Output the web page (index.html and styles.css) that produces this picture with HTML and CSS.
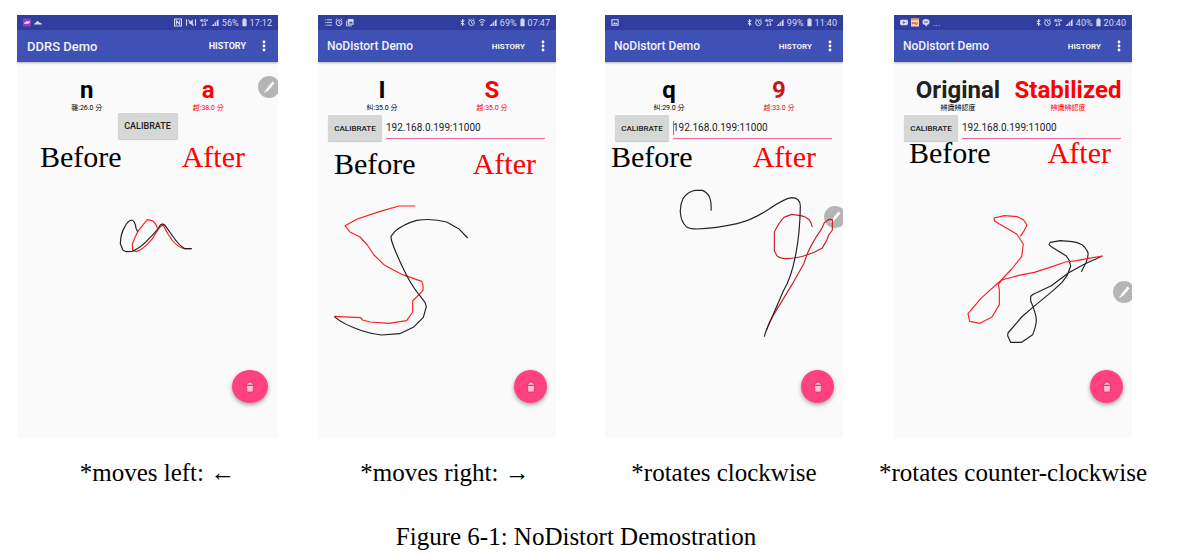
FILE: index.html
```html
<!DOCTYPE html>
<html lang="en">
<head>
<meta charset="utf-8">
<title>NoDistort Demostration</title>
<link rel="stylesheet" href="styles.css">
</head>
<body>
<svg class="symbols" aria-hidden="true">
  <symbol id="bluetooth" viewBox="0 0 6 10"><path d="M.8 3l4.2 4-2 2V1l2 2-4.2 4" fill="none" stroke="currentColor" stroke-width="1.200"/></symbol>
  <symbol id="alarm" viewBox="0 0 8 10"><path d="M4 3.500v2l1.500.8M.5 2L2 .8M7.500 2L6 .8" fill="none" stroke="currentColor"/><circle cx="4" cy="5.300" r="3.200" fill="none" stroke="currentColor" stroke-width="1.100"/></symbol>
  <symbol id="wifi" viewBox="0 0 8 10"><path d="M.5 3q3.500-3 7 0M1.800 5q2.200-1.800 4.400 0M4 6v2.500M2.600 7.200L4 8.600l1.400-1.400" fill="none" stroke="currentColor" stroke-width="1.100"/></symbol>
  <symbol id="lte" viewBox="0 0 9 10"><path d="M1.800 1L.5 3.200H3M2.300 1v3.500M6.500 1.500H4.500v2.700h2V3M7 2.500h2M8 1.500v2M3 6v3M1.800 7.800L3 9l1.200-1.200M6 9V6M4.800 7.200L6 6l1.200 1.200" fill="none" stroke="currentColor"/></symbol>
  <symbol id="signal" viewBox="0 0 8 10"><path d="M0 9l3-3v3zM3.600 5.400L5 4v5H3.600zM5.800 3.200L8 1v8H5.800z" fill="currentColor"/></symbol>
  <symbol id="battery" viewBox="0 0 6 10"><path d="M1.800 0h2.400v1H5.500v8.500h-5V1h1.300z" fill="currentColor"/></symbol>
  <symbol id="trash" viewBox="0 0 10 12"><path d="M1.500 4.500h7L8 11H2z" fill="#ffc0d8" stroke="#c93370" stroke-width=".7"/><path d="M1 4.200Q1.500 2 3.200 2L4 1h2l.8 1q1.700 0 2.200 2.200z" fill="#ffb0cf" stroke="#a92c60" stroke-width=".7"/></symbol>
  <symbol id="pen" viewBox="0 0 22 22"><path d="M7.300 14.300L6 16.800 8.700 15.900zM7.600 13.900L14.500 5.500l2 1.700-7 8.400z" fill="#fff"/></symbol>
  <symbol id="more" viewBox="0 0 4 12"><circle cx="2" cy="2" r="1.400"/><circle cx="2" cy="6" r="1.400"/><circle cx="2" cy="10" r="1.400"/></symbol>
</svg>

<figure class="board">
  <div class="phones">

    <figure class="shot shot-left">
      <div class="phone">
        <div class="status">
          <svg class="ic-square" viewBox="0 0 9 9"><path d="M0 0h9v9H0z" fill="#8e3dc4"/><path d="M1 6q0-2 2-2 1-2 2.500-.5L8 3q0 3-2 3z" fill="#f3d9ff"/></svg>
          <svg class="ic-square" viewBox="0 0 9 9"><path d="M0 6.800q0-2 2-2 1-3 3-1.200 1.200 0 1.400 1.200Q9 4.800 9 6.800z" fill="currentColor"/></svg>
          <span class="spacer"></span>
          <svg class="ic-square" viewBox="0 0 9 9"><path d="M.6.6h7.800v7.800H.6zM2.700 7V2.500l3.600 4V2" fill="none" stroke="currentColor" stroke-width="1.200"/></svg>
          <svg class="ic-wide" viewBox="0 0 12 10"><path d="M1 1.500v7M11 1.500v7M3 2l6 6.500" fill="none" stroke="currentColor" stroke-width="1.200"/><path d="M4 4h1.500L8 1.500v7L5.500 6.500H4z" fill="currentColor"/></svg>
          <svg class="ic-lte"><use href="#lte"/></svg>
          <svg class="ic-signal"><use href="#signal"/></svg>
          <span>56%</span>
          <svg class="ic-battery"><use href="#battery"/></svg>
          <time>17:12</time>
        </div>
        <header class="appbar">
          <h2 class="app-title">DDRS Demo</h2>
          <button class="history">HISTORY</button>
          <button class="more" aria-label="More options"><svg><use href="#more"/></svg></button>
        </header>
        <div class="results">
          <div class="result"><strong>n</strong><small>雜:26.0 分</small></div>
          <div class="result after"><strong>a</strong><small>越:38.0 分</small></div>
        </div>
        <div class="controls"><button class="calibrate">CALIBRATE</button></div>
        <div class="labels"><span>Before</span><span class="after">After</span></div>
        <div class="canvas">
          <svg class="strokes" viewBox="-249 -27 783 771">
            <path class="ink-red" d="M172 114Q165 95 156 92L142 89Q130 103 113 125Q104 143 97 162L98 181L110 185Q126 179 142 163Q158 148 170 125Q181 106 190 106Q201 130 216 150Q231 170 252 176H275"/>
            <path class="ink" d="M113 125L108 115Q106 93 95 90Q83 92 73 113Q62 132 61 161L69 181L79 185L96 184Q124 173 150 143Q172 121 181 105Q188 99 195 106L218 138Q237 167 255 176H275"/>
          </svg>
          <button class="fab" aria-label="Delete"><svg><use href="#trash"/></svg></button>
        </div>
        <span class="bubble"><svg><use href="#pen"/></svg></span>
      </div>
      <figcaption class="note">*moves left: ←</figcaption>
    </figure>

    <figure class="shot shot-right">
      <div class="phone">
        <div class="status">
          <svg class="ic-square" viewBox="0 0 9 9"><path d="M1 1.500h1M3 1.500h6M1 4.500h1M3 4.500h6M1 7.500h1M3 7.500h6" stroke="currentColor"/></svg>
          <svg class="ic-square"><use href="#alarm"/></svg>
          <svg class="ic-square" viewBox="0 0 9 9"><path d="M.7 2.500v5.800h5.800" fill="none" stroke="currentColor"/><path d="M2 .5h6.500V7H2z" fill="currentColor"/><path d="M3 5.500l1.500-2 1 1L6.500 3l1.200 2.500z" fill="#303f9f"/></svg>
          <span class="spacer"></span>
          <svg class="ic-bluetooth"><use href="#bluetooth"/></svg>
          <svg class="ic-alarm"><use href="#alarm"/></svg>
          <svg class="ic-lte"><use href="#wifi"/></svg>
          <svg class="ic-signal"><use href="#signal"/></svg>
          <span>69%</span>
          <svg class="ic-battery"><use href="#battery"/></svg>
          <time>07:47</time>
        </div>
        <header class="appbar">
          <h2 class="app-title">NoDistort Demo</h2>
          <button class="history">HISTORY</button>
          <button class="more" aria-label="More options"><svg><use href="#more"/></svg></button>
        </header>
        <div class="results">
          <div class="result"><strong>I</strong><small>糾:35.0 分</small></div>
          <div class="result after"><strong>S</strong><small>越:35.0 分</small></div>
        </div>
        <div class="controls"><button class="calibrate">CALIBRATE</button><input class="address" aria-label="Server address" value="192.168.0.199:11000"></div>
        <div class="labels"><span>Before</span><span class="after">After</span></div>
        <div class="canvas">
          <svg class="strokes" viewBox="-6 -27 714 771">
            <path class="ink-red" d="M286 48H237L180 64L112 87L75 107L90 126L120 141L142 165L162 195L194 226L222 241L248 254L305 274L309 285V302L278 333V366L260 392L207 400L150 396L128 390L122 383L43 379"/>
            <path class="ink" d="M443 144L416 116L380 96Q337 84 290 91Q250 102 224 125L213 139L214 150Q228 194 262 260Q281 294 297 314L315 337L319 350L310 382L280 412L239 431L185 435Q152 431 128 423Q68 403 43 380"/>
          </svg>
          <button class="fab" aria-label="Delete"><svg><use href="#trash"/></svg></button>
        </div>
      </div>
      <figcaption class="note">*moves right: →</figcaption>
    </figure>

    <figure class="shot shot-clockwise">
      <div class="phone">
        <div class="status">
          <svg class="ic-square" viewBox="0 0 9 9"><path d="M1 1.500h7v6H1z" fill="none" stroke="currentColor" stroke-width="1.200"/><path d="M2 6.500l2-2.500 1.300 1.500L6 4.500l1.500 2z" fill="currentColor"/></svg>
          <span class="spacer"></span>
          <svg class="ic-bluetooth"><use href="#bluetooth"/></svg>
          <svg class="ic-alarm"><use href="#alarm"/></svg>
          <svg class="ic-lte"><use href="#lte"/></svg>
          <svg class="ic-signal"><use href="#signal"/></svg>
          <span>99%</span>
          <svg class="ic-battery"><use href="#battery"/></svg>
          <time>11:40</time>
        </div>
        <header class="appbar">
          <h2 class="app-title">NoDistort Demo</h2>
          <button class="history">HISTORY</button>
          <button class="more" aria-label="More options"><svg><use href="#more"/></svg></button>
        </header>
        <div class="results">
          <div class="result"><strong>q</strong><small>糾:29.0 分</small></div>
          <div class="result after"><strong>9</strong><small>越:33.0 分</small></div>
        </div>
        <div class="controls"><button class="calibrate">CALIBRATE</button><input class="address editing" aria-label="Server address" value="192.168.0.199:11000"></div>
        <div class="labels"><span>Before</span><span class="after">After</span></div>
        <div class="canvas">
          <span class="bubble"><svg><use href="#pen"/></svg></span>
          <svg class="strokes" viewBox="15 3 714 771">
            <path class="ink-red" d="M637 141Q632 112 602 107L575 103L552 112Q536 129 523 156V212L530 226Q538 235 558 236Q593 235 620 225Q642 219 666 205L680 182L686 165L697 150V119L687 118L673 128L665 146Q635 190 622 221L611 252L580 307L518 409Q505 430 499 452"/>
            <path class="ink" d="M333 92Q335 68 329 52Q321 36 307 31H286Q263 34 249 56Q240 73 241 97Q243 126 259 140Q270 147 290 147Q348 145 411 131Q457 120 506 88Q554 55 575 53Q600 53 601 78Q600 161 586 230Q573 295 550 333L510 426Q497 453 493 470"/>
          </svg>
          <button class="fab" aria-label="Delete"><svg><use href="#trash"/></svg></button>
        </div>
      </div>
      <figcaption class="note">*rotates clockwise</figcaption>
    </figure>

    <figure class="shot shot-counter">
      <div class="phone">
        <div class="status">
          <svg class="ic-square" viewBox="0 0 9 9"><rect y="1.500" width="9" height="6" rx="1.500" fill="currentColor"/><path d="M3.500 3v3L6 4.500z" fill="#303f9f"/></svg>
          <svg class="ic-square" viewBox="0 0 9 9"><path d="M0 0h9v9H0z" fill="#f5d7c4"/><path d="M0 0h9v2H0z" fill="#e89a3c"/><path d="M1.500 6.500V4l2 2V4M5 4v2.500h2V4" fill="none" stroke="#e0433a"/></svg>
          <svg class="ic-square" viewBox="0 0 9 9"><ellipse cx="4.500" cy="4" rx="4" ry="3.300" fill="currentColor"/><path d="M3.500 7h3L4.500 9z" fill="currentColor"/><path d="M2.500 4h4" stroke="#303f9f"/></svg>
          <span>...</span>
          <span class="spacer"></span>
          <svg class="ic-bluetooth"><use href="#bluetooth"/></svg>
          <svg class="ic-alarm"><use href="#alarm"/></svg>
          <svg class="ic-lte"><use href="#lte"/></svg>
          <svg class="ic-signal"><use href="#signal"/></svg>
          <span>40%</span>
          <svg class="ic-battery"><use href="#battery"/></svg>
          <time>20:40</time>
        </div>
        <header class="appbar">
          <h2 class="app-title">NoDistort Demo</h2>
          <button class="history">HISTORY</button>
          <button class="more" aria-label="More options"><svg><use href="#more"/></svg></button>
        </header>
        <div class="results">
          <div class="result"><strong>Original</strong><small>辨識辨認度</small></div>
          <div class="result after"><strong>Stabilized</strong><small>辨識辨認度</small></div>
        </div>
        <div class="controls"><button class="calibrate">CALIBRATE</button><input class="address" aria-label="Server address" value="192.168.0.199:11000"></div>
        <div class="labels"><span>Before</span><span class="after">After</span></div>
        <div class="canvas">
          <svg class="strokes" viewBox="12 -27 714 771">
            <path class="ink" d="M574 245L588 218Q597 196 593 185Q587 172 576 164Q561 156 547 155L511 152L481 157L477 164L484 170L529 198L538 212L542 229L531 257L516 277L490 301L431 350L395 381L354 429L353 437L362 457H395L428 434Q438 409 439 393L438 379L430 352L422 333V319L430 313L484 287L536 248L584 222L637 198"/>
            <path class="ink-red" d="M391 139L403 121L411 105L400 89L382 80L343 77L312 84L314 94L380 132L400 162L395 200L365 237L334 270L273 325L234 371L239 394L270 400L306 381L328 344V300L325 282L336 270L387 256L433 247L477 233L527 216L560 212L596 205L637 198"/>
          </svg>
          <span class="bubble"><svg><use href="#pen"/></svg></span>
          <button class="fab" aria-label="Delete"><svg><use href="#trash"/></svg></button>
        </div>
      </div>
      <figcaption class="note">*rotates counter-clockwise</figcaption>
    </figure>
  </div>
  <figcaption class="title">Figure 6-1: NoDistort Demostration</figcaption>
</figure>
</body>
</html>
```
FILE: styles.css
```css
* {
  box-sizing: border-box;
}

body {
  margin: 0;
  background: #fff;
  color: #000;
  font-family: "Liberation Serif", "Times New Roman", serif;
}

figure,
h2 {
  margin: 0;
}

button,
input {
  margin: 0;
  padding: 0;
  border: 0;
  background: none;
  color: inherit;
  font: inherit;
}

.symbols {
  position: absolute;
  width: 0;
  height: 0;
}

.phones {
  display: grid;
  grid-template-columns:
    minmax(0, 261fr) 40px minmax(0, 238fr) 49px
    minmax(0, 238fr) 51px minmax(0, 238fr);
  padding: 15px 68px 0 17px;
}

.shot-left { grid-column: 1; }
.shot-right { grid-column: 3; }
.shot-clockwise { grid-column: 5; }
.shot-counter { grid-column: 7; }

.phone {
  position: relative;
  overflow: hidden;
  background: #fafafa;
  font-family: Roboto, "Noto Sans CJK TC", sans-serif;
}

/* Status bar */
.status {
  display: flex;
  align-items: center;
  gap: 3px;
  height: 15px;
  padding: 0 6px;
  background: #303f9f;
  color: #d5d9ee;
  font-size: 9px;
  line-height: 16px;
}

.spacer { flex: 1; }

.status svg {
  flex: none;
  height: 9px;
}

.ic-square { width: 8px; }
.ic-wide { width: 12px; }
.ic-bluetooth { width: 5px; }
.ic-alarm { width: 7px; }
.ic-lte { width: 8px; }
.ic-signal { width: 8px; }
.ic-battery { width: 5px; }

/* App bar */
.appbar {
  position: relative;
  display: flex;
  align-items: center;
  height: 32px;
  padding: 0 11px 0 9px;
  background: #3f51b5;
  box-shadow: 0 1px 2px rgba(0, 0, 0, 0.3);
  color: #f1f2fa;
}

.app-title {
  flex: 1;
  font-size: 12px;
  font-weight: 500;
  white-space: nowrap;
}

.history {
  font-size: 8px;
  font-weight: 700;
}

.more {
  display: flex;
  margin-left: 16px;
}

.more svg {
  width: 4px;
  height: 12px;
  fill: #fff;
}

/* Recognised letters */
.results {
  display: grid;
  grid-template-columns: 1fr 1fr;
  height: 50px;
  padding: 14px 9px 0;
}

.result {
  display: flex;
  flex-direction: column;
  align-items: center;
}

.result strong {
  font-size: 24px;
  line-height: 28px;
}

.result small {
  font-size: 7px;
  line-height: 8px;
}

.after { color: #f00; }
.shot-clockwise .result.after { color: #c8171b; }
.shot-counter .result:first-child strong { color: #212121; }

/* Calibration row */
.controls {
  display: flex;
  gap: 4px;
  height: 30px;
  padding: 3px 11px 0 10px;
}

.calibrate {
  flex: none;
  width: 54px;
  height: 26px;
  border-radius: 1px;
  background: #d6d7d7;
  box-shadow: 0 1px 1px rgba(0, 0, 0, 0.2);
  color: #212121;
  font-size: 8px;
  font-weight: 500;
}

.address {
  flex: 1;
  min-width: 0;
  height: 24px;
  padding-top: 2px;
  border-bottom: 1px solid #f0609a;
  color: #222;
  font-size: 10px;
}

.editing {
  background: linear-gradient(#e0508a, #e0508a) 0 6px / 1px 14px no-repeat;
}

/* Before and after labels */
.labels {
  display: flex;
  justify-content: space-between;
  height: 39px;
  font-family: "Liberation Serif", "Times New Roman", serif;
  font-size: 30px;
  line-height: 30px;
}

.shot-left .labels { padding: 0 33px 0 23px; }
.shot-right .labels { padding: 7px 20px 0 16px; }
.shot-clockwise .labels { padding: 0 27px 0 6px; }

.shot-counter .labels {
  height: 43px;
  margin-top: -4px;
  padding: 0 21px 0 15px;
}

/* Drawing area */
.canvas { position: relative; }

.strokes {
  position: relative;
  display: block;
  width: 100%;
}

.ink,
.ink-red {
  fill: none;
  stroke: #222;
  stroke-width: 3.5;
  stroke-linejoin: round;
}

.ink-red { stroke: #fa2020; }
.shot-clockwise .ink-red { stroke: #c82028; }

.fab {
  position: absolute;
  right: 9px;
  bottom: 35px;
  display: flex;
  align-items: center;
  justify-content: center;
  width: 33px;
  height: 33px;
  border-radius: 50%;
  background: #ff4081;
  box-shadow: 0 2px 4px rgba(0, 0, 0, 0.35);
}

.fab svg {
  width: 10px;
  height: 12px;
}

.bubble {
  position: absolute;
  width: 22px;
  height: 22px;
  border-radius: 50%;
  background: #b5b5b5;
}

.bubble svg {
  display: block;
  width: 22px;
  height: 22px;
}

.shot-left .bubble { top: 61px; right: -2px; }
.shot-clockwise .bubble { top: 25px; right: -3px; }
.shot-counter .bubble { top: 100px; right: -3px; }

/* The first device has a wider screen */
.shot-left .appbar { padding: 0 12px 0 10px; }
.shot-left .app-title { font-size: 13px; }
.shot-left .history { font-size: 9px; }

.shot-left .controls {
  justify-content: center;
  padding: 1px 0 0;
}

.shot-left .calibrate {
  width: 60px;
  font-size: 9px;
}

.shot-left .fab {
  right: 10px;
  width: 36px;
}

/* Captions */
.note {
  display: flex;
  justify-content: center;
  margin-top: 21px;
  font-size: 25px;
  line-height: 28px;
  white-space: nowrap;
}

.shot-left .note { padding-left: 20px; }
.shot-right .note { padding-left: 16px; }

.title {
  margin-top: 36px;
  padding-right: 48px;
  font-size: 25px;
  line-height: 28px;
  text-align: center;
}
```
